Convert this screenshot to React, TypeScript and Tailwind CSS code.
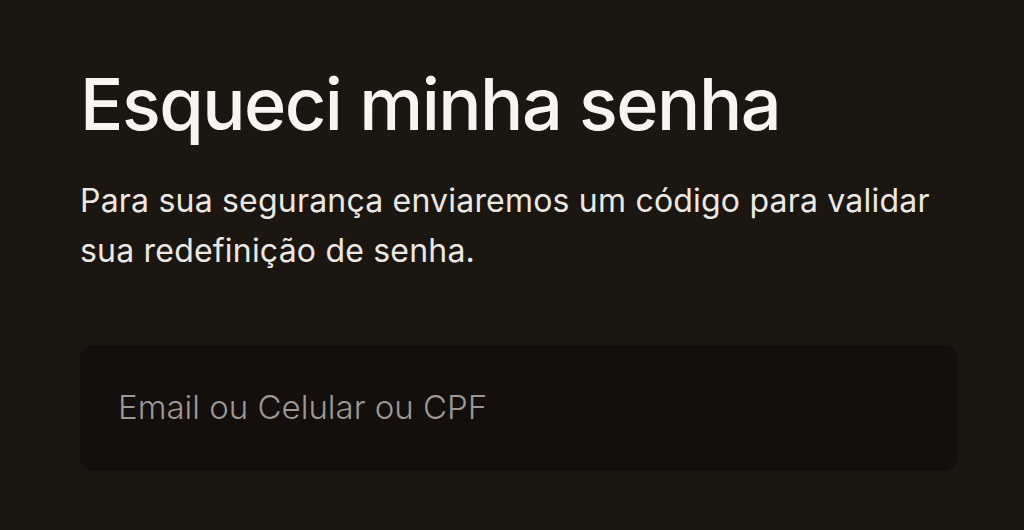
export default function App() {
  return (
    <div className="min-h-[530px] w-full bg-[#1c1611] px-20 pt-[68px] font-['Inter',sans-serif]">
      <h1 className="text-[72px] font-medium leading-none tracking-[-1.5px] text-[#f7f5f2]">
        Esqueci minha senha
      </h1>
      <p className="mt-[36px] max-w-[880px] text-[32px] leading-[50px] tracking-[0.2px] text-[#ebe8e4]">
        Para sua segurança enviaremos um código para validar sua redefinição
        de senha.
      </p>
      <div className="mt-[69px] flex h-[126px] w-[877px] items-center rounded-[14px] bg-[#140e0c] px-[38px]">
        <input
          type="text"
          placeholder="Email ou Celular ou CPF"
          className="w-full bg-transparent text-[33px] font-light text-[#e5e5e5] outline-none placeholder:text-[#9c9895]"
        />
      </div>
    </div>
  );
}
